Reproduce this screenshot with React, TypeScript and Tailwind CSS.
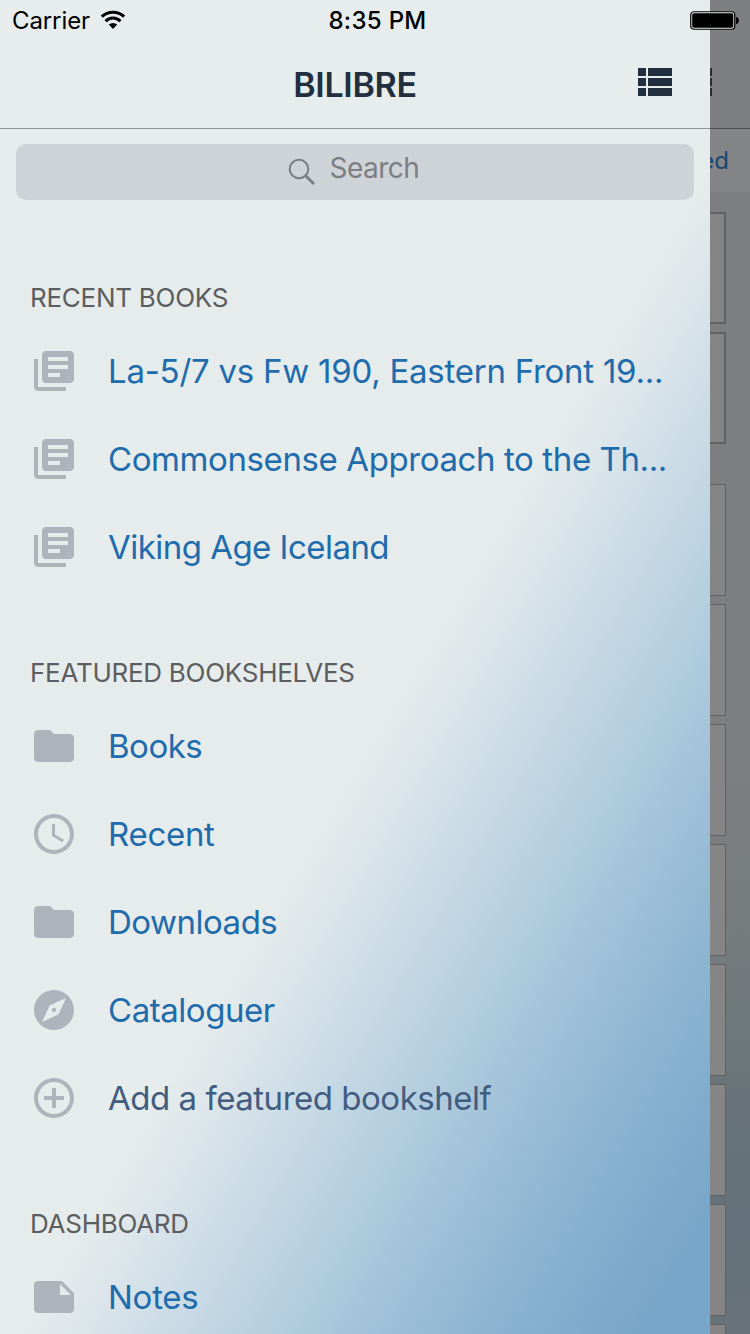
import type { ReactNode } from "react";
import { MdAddCircleOutline, MdExplore, MdFolder, MdLibraryBooks, MdNote } from "react-icons/md";

function ClockIcon() {
  return (
    <svg viewBox="0 0 24 24" className="size-12" fill="currentColor">
      <path d="M11.99 2C6.47 2 2 6.48 2 12s4.47 10 9.99 10C17.52 22 22 17.52 22 12S17.52 2 11.99 2zM12 20c-4.42 0-8-3.58-8-8s3.58-8 8-8 8 3.58 8 8-3.58 8-8 8z" />
      <path d="M12.5 7H11v6l5.25 3.15.75-1.23-4.5-2.67z" />
    </svg>
  );
}

function ListIcon() {
  return (
    <svg viewBox="0 0 24 24" className="size-12" fill="#222f3e">
      <path d="M4 14h4v-4H4v4zm0 5h4v-4H4v4zM4 9h4V5H4v4zm5 5h12v-4H9v4zm0 5h12v-4H9v4zM9 5v4h12V5H9z" />
    </svg>
  );
}

function StatusBar() {
  return (
    <div className="absolute inset-x-0 top-0 flex h-10 items-center text-[24px] leading-10 text-black">
      <div className="flex flex-1 items-center pl-3">
        <span className="relative top-px w-[79px] tracking-[-0.1px]">Carrier</span>
        <svg viewBox="0 0 26 20" className="ml-[9px] h-5 w-[26px]" fill="none" stroke="#000">
          <path d="M1.8 6.6a16.5 16.5 0 0 1 22.4 0" strokeWidth="3" />
          <path d="M5.6 11.2a10.3 10.3 0 0 1 14.8 0" strokeWidth="3" />
          <path d="M8.8 14.6q4.2-3.4 8.4 0l-4.2 4.4z" fill="#000" stroke="none" />
        </svg>
      </div>
      <span className="relative left-[2px] top-px font-medium tracking-[0.3px]">8:35 PM</span>
      <div className="flex flex-1 justify-end pr-[11px]">
        <svg viewBox="0 0 49 19" className="h-[19px] w-[49px]">
          <rect x=".75" y=".75" width="44" height="17.5" rx="3" fill="#e6eceb" stroke="#000" strokeWidth="1.2" />
          <rect x="2.2" y="2.2" width="41.1" height="14.6" rx="1.8" fill="#000" />
          <path d="M46 6h.7q2.3 1 2.3 3.5t-2.3 3.5H46z" />
        </svg>
      </div>
    </div>
  );
}

function Row({ icon, label, spacing, color = "text-[#206bab]" }: { icon: ReactNode; label: string; spacing: string; color?: string }) {
  return (
    <li className="flex h-[88px] items-center pl-[30px]">
      <span className="shrink-0 text-[#aeb4bb]">{icon}</span>
      <span className={`ml-[30px] whitespace-nowrap pb-px text-[33px] leading-[44px] ${spacing} ${color}`}>{label}</span>
    </li>
  );
}

function Heading({ children, className }: { children: ReactNode; className: string }) {
  return (
    <h2 className={`flex items-end pb-[13px] pl-[30px] text-[26px] leading-8 tracking-[-0.27px] text-[#5b5d60] ${className}`}>
      {children}
    </h2>
  );
}

const library = <MdLibraryBooks className="size-12" />;
const folder = <MdFolder className="size-12" />;

function Drawer() {
  return (
    <aside className="flex h-full w-[710px] shrink-0 flex-col overflow-hidden bg-[linear-gradient(120.7deg,#e6eceb_0%,#e6eceb_54%,#dae4ea_58.5%,#b3cedf_71%,#9bbdd6_79.5%,#86b1cf_87.3%,#78a6ca_95%)]">
      <header className="grid h-[129px] shrink-0 grid-cols-[1fr_auto_1fr] items-center border-b border-[#8e9394] bg-[#e7edec] pt-[40px]">
        <span />
        <h1 className="pt-px text-[34px] font-semibold leading-[44px] tracking-[-0.3px] text-[#222f3e]">BILIBRE</h1>
        <span className="flex justify-end pb-[4px] pr-8"><ListIcon /></span>
      </header>
      <div className="mx-4 mt-[15px] flex h-14 shrink-0 items-center justify-center rounded-[10px] bg-[#ced3d7] text-[28px] text-[#7d7e83]">
        <svg viewBox="0 0 28 28" className="mr-[14px] size-7" fill="none" stroke="currentColor">
          <circle cx="11" cy="11" r="9.3" strokeWidth="2" />
          <path d="M17.7 17.7 26 26" strokeWidth="3" />
        </svg>
        <span className="-mt-[9px] w-[93px] leading-9 tracking-[-0.5px]">Search</span>
      </div>
      <Heading className="h-[127px] shrink-0">RECENT BOOKS</Heading>
      <ul className="shrink-0">
        <Row icon={library} label="La-5/7 vs Fw 190, Eastern Front 19..." spacing="tracking-[-0.25px]" />
        <Row icon={library} label="Commonsense Approach to the Th..." spacing="tracking-[-0.4px]" />
        <Row icon={library} label="Viking Age Iceland" spacing="tracking-[-0.53px]" />
      </ul>
      <Heading className="h-[111px] shrink-0">FEATURED BOOKSHELVES</Heading>
      <ul className="shrink-0">
        <Row icon={folder} label="Books" spacing="tracking-[-0.5px]" />
        <Row icon={<ClockIcon />} label="Recent" spacing="tracking-[-0.3px]" />
        <Row icon={folder} label="Downloads" spacing="tracking-[-0.5px]" />
        <Row icon={<MdExplore className="size-12" />} label="Cataloguer" spacing="tracking-[-0.45px]" />
        <Row icon={<MdAddCircleOutline className="size-12" />} label="Add a featured bookshelf" spacing="tracking-[-0.48px]" color="text-[#425c80]" />
      </ul>
      <Heading className="h-[111px] shrink-0">DASHBOARD</Heading>
      <ul className="shrink-0">
        <Row icon={<MdNote className="size-12" />} label="Notes" spacing="tracking-[-0.25px]" />
      </ul>
    </aside>
  );
}

function DimmedPage() {
  return (
    <main className="flex h-full w-10 shrink-0 flex-col overflow-hidden bg-[linear-gradient(170deg,#7d7e7f_0%,#7d7e7f_58%,#737b7d_72%,#69747a_82%,#63717a_92%,#697379_100%)]">
      <div className="flex h-[129px] shrink-0 flex-col justify-center gap-[2px] border-b border-[#4d4e4f] bg-[#7e7f80] pt-[35px]">
        <i className="h-2 w-[2px] bg-[#292b2e]" />
        <i className="h-2 w-[2px] bg-[#292b2e]" />
        <i className="h-2 w-[2px] bg-[#292b2e]" />
      </div>
      <div className="flex h-[63px] shrink-0 items-center justify-end bg-[#838485] pr-[21px] text-[24px] text-[#1b486e]">ed</div>
      <div className="mt-5 flex shrink-0 flex-col gap-2">
        <div className="h-28 w-4 border-y-2 border-r-2 border-[#5f6162] bg-[#858585]" />
        <div className="h-28 w-4 border-y-2 border-r-2 border-[#5f6162] bg-[#858585]" />
      </div>
      <div className="mt-10 flex shrink-0 flex-col gap-2">
        {Array.from({ length: 8 }, (_, i) => (
          <div key={i} className="h-28 w-4 border-y border-r border-[#606264] bg-[#858585]" />
        ))}
      </div>
    </main>
  );
}

export default function App() {
  return (
    <div className="relative flex h-[1334px] w-[750px] overflow-hidden font-['Inter','Liberation_Sans',sans-serif]">
      <Drawer />
      <DimmedPage />
      <StatusBar />
    </div>
  );
}
